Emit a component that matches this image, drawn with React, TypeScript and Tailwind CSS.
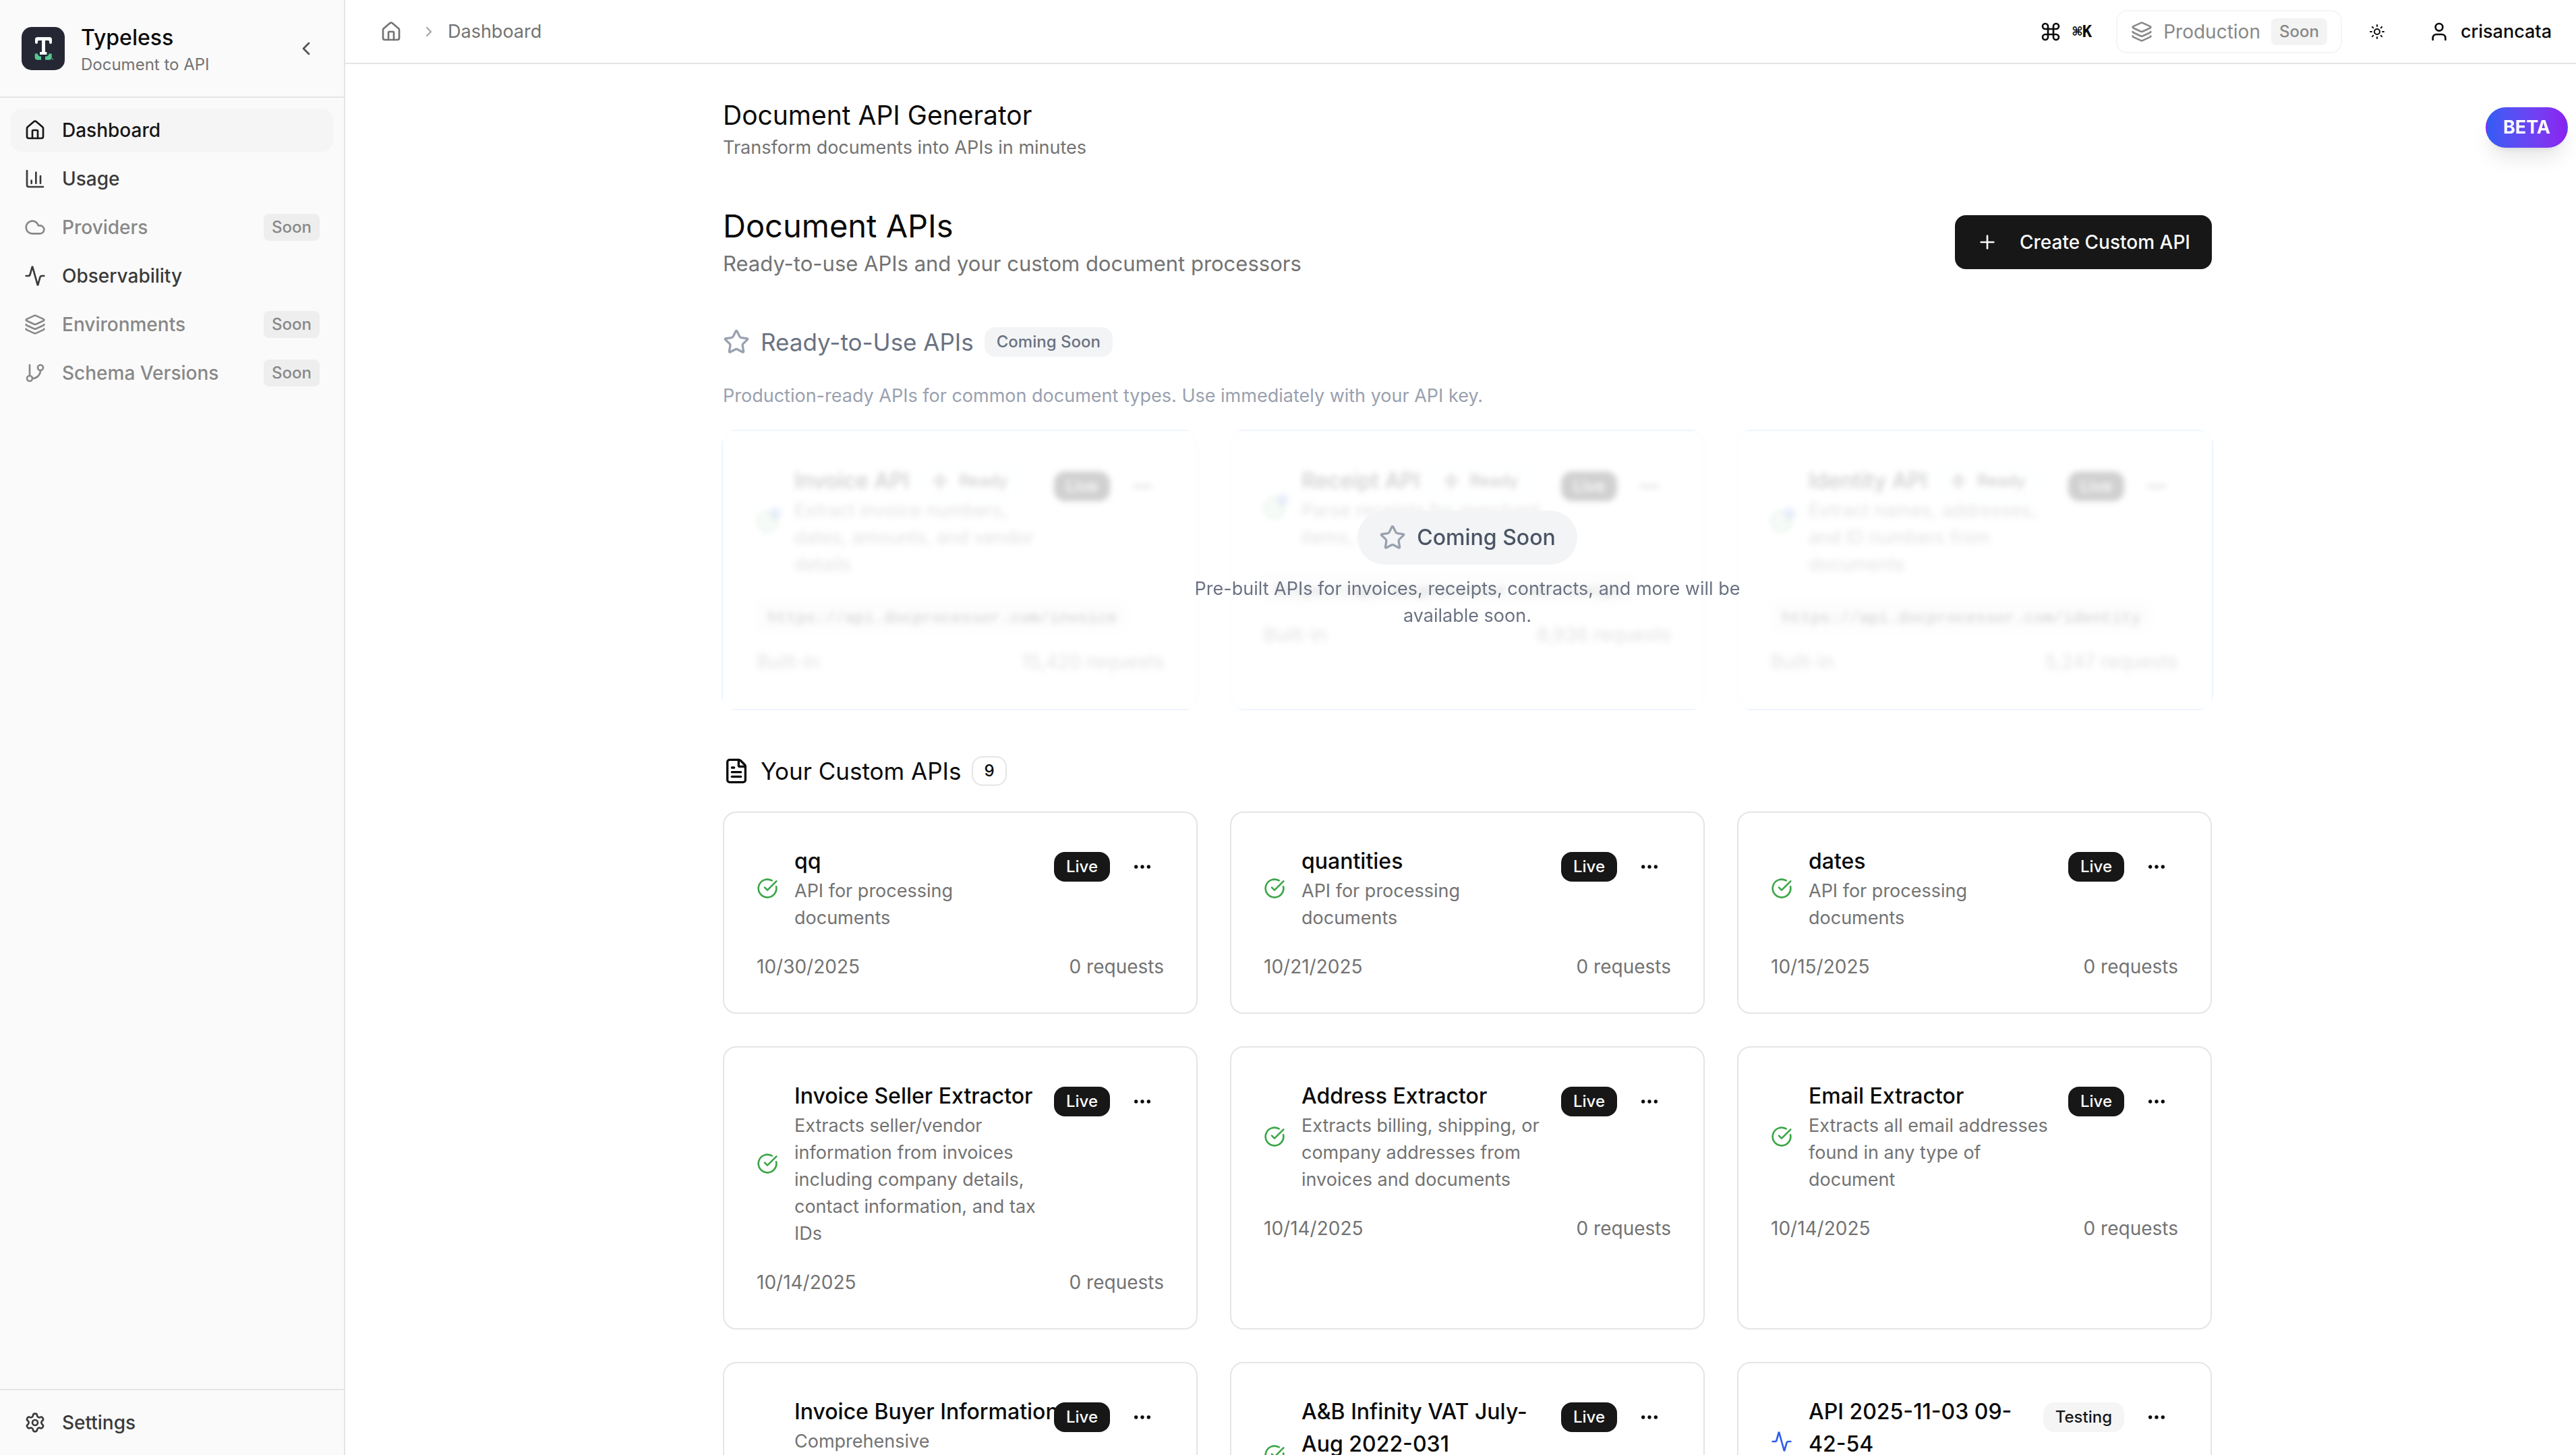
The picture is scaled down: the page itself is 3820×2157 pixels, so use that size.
import React from 'react';
import {
  Activity,
  ChevronLeft,
  ChevronRight,
  CircleCheckBig,
  Cloud,
  Command,
  Ellipsis,
  FileText,
  GitBranch,
  House,
  Layers,
  Plus,
  Settings,
  Star,
  Sun,
  User,
  Zap,
} from 'lucide-react';

interface NavItem {
  label: string;
  icon: React.ReactNode;
  active?: boolean;
  soon?: boolean;
}

interface ReadyApi {
  name: string;
  description: string;
  endpoint: string;
  requests: string;
}

interface CustomApi {
  name: string;
  description: string;
  date: string;
  status: 'Live' | 'Testing';
  singleLine?: boolean;
}

// Axis with three bars
const ChartIcon = () => (
  <svg className="size-8" viewBox="0 0 24 24" fill="none" stroke="currentColor" strokeWidth="2" strokeLinecap="round" strokeLinejoin="round">
    <path d="M3 3v16a2 2 0 0 0 2 2h16" />
    <path d="M18 17V9" />
    <path d="M13 17V5" />
    <path d="M8 17v-3" />
  </svg>
);

const navItems: NavItem[] = [
  { label: 'Dashboard', icon: <House className="size-8" />, active: true },
  { label: 'Usage', icon: <ChartIcon /> },
  { label: 'Providers', icon: <Cloud className="size-8" />, soon: true },
  { label: 'Observability', icon: <Activity className="size-8" /> },
  { label: 'Environments', icon: <Layers className="size-8" />, soon: true },
  { label: 'Schema Versions', icon: <GitBranch className="size-8" />, soon: true },
];

const readyApis: ReadyApi[] = [
  {
    name: 'Invoice API',
    description: 'Extract invoice numbers, dates, amounts, and vendor details',
    endpoint: 'https://api.docprocessor.com/invoice',
    requests: '15,420',
  },
  {
    name: 'Receipt API',
    description: 'Parse receipts for merchant, items, and totals',
    endpoint: 'https://api.docprocessor.com/receipt',
    requests: '8,936',
  },
  {
    name: 'Identity API',
    description: 'Extract names, addresses, and ID numbers from documents',
    endpoint: 'https://api.docprocessor.com/identity',
    requests: '5,247',
  },
];

const customApis: CustomApi[] = [
  { name: 'qq', description: 'API for processing documents', date: '10/30/2025', status: 'Live' },
  { name: 'quantities', description: 'API for processing documents', date: '10/21/2025', status: 'Live' },
  { name: 'dates', description: 'API for processing documents', date: '10/15/2025', status: 'Live' },
  {
    name: 'Invoice Seller Extractor',
    description: 'Extracts seller/vendor information from invoices including company details, contact information, and tax IDs',
    date: '10/14/2025',
    status: 'Live',
  },
  {
    name: 'Address Extractor',
    description: 'Extracts billing, shipping, or company addresses from invoices and documents',
    date: '10/14/2025',
    status: 'Live',
  },
  {
    name: 'Email Extractor',
    description: 'Extracts all email addresses found in any type of document',
    date: '10/14/2025',
    status: 'Live',
  },
  {
    name: 'Invoice Buyer Information',
    description: 'Comprehensive buyer/customer information extraction from invoices including company details, addresses, and tax IDs',
    date: '10/14/2025',
    status: 'Live',
    singleLine: true,
  },
  { name: 'A&B Infinity VAT July-Aug 2022-031', description: 'API for processing documents', date: '10/14/2025', status: 'Live' },
  { name: 'API 2025-11-03 09-42-54', description: 'Draft API', date: '11/3/2025', status: 'Testing' },
];

const Logo = () => (
  <svg className="size-16 shrink-0" viewBox="0 0 64 64" fill="none">
    <rect width="64" height="64" rx="15" fill="#252734" />
    <path
      d="M23 15h18.500a3.500 3.500 0 0 1 3.500 3.500V23a2 2 0 0 1-4 0v-1.500a1.500 1.500 0 0 0-1.500-1.500H35v17h1.300a1.200 1.200 0 0 1 1.200 1.200V41H27v-2.800a1.200 1.200 0 0 1 1.200-1.200H30V20h-4.500a1.500 1.500 0 0 0-1.500 1.500V23a2 2 0 0 1-4 0v-4.500A3.500 3.500 0 0 1 23 15Z"
      fill="#f6fffa"
    />
    <path d="M19.700 39.500h4.300v1.500l2.500 2.500H29v5.200h-5.500a3.800 3.800 0 0 1-3.800-3.800Z" fill="#56c890" />
    <path d="M44.700 39.500h-4.300v1.500l-2.500 2.500H35v5.200h5.900a3.800 3.800 0 0 0 3.800-3.800Z" fill="#56c890" />
    <circle cx="46" cy="47.500" r="1" fill="#8b9a98" />
  </svg>
);

const StatusBadge = ({ status }: { status: CustomApi['status'] }) => (
  <span
    className={`flex h-11 items-center rounded-2xl px-[18px] text-[24px] leading-8 font-medium ${
      status === 'Live' ? 'bg-[#171717] text-[#fafafa]' : 'bg-neutral-100 text-[#171717]'
    }`}
  >
    {status}
  </span>
);

const CardActions = ({ status, name }: { status: CustomApi['status']; name: string }) => (
  <div className="flex shrink-0 items-center gap-4">
    <StatusBadge status={status} />
    <button className="flex size-16 items-center justify-center rounded-2xl" aria-label={`Actions for ${name}`}>
      <Ellipsis className="size-8" />
    </button>
  </div>
);

const ReadyCard = ({ api }: { api: ReadyApi }) => (
  <div className="rounded-[20px] border-2 border-neutral-100 bg-blue-50/20 p-12 ring-2 ring-[#edf4ff]">
    <div className="flex items-start justify-between">
      <div className="flex items-center gap-6">
        <div className="relative shrink-0">
          <CircleCheckBig className="size-8 text-[#3da648]" />
          <Zap className="absolute -top-2 -right-2 size-6 fill-[#2f5fea] text-[#2f5fea] opacity-60" />
        </div>
        <div>
          <div className="flex h-12 items-center gap-4">
            <h3 className="text-[32px] leading-12 font-medium">{api.name}</h3>
            <span className="flex h-11 items-center gap-4 rounded-2xl border-2 border-neutral-100 px-4 text-[24px] leading-8 font-medium">
              <Zap className="size-6" />
              Ready
            </span>
          </div>
          <p className="text-[27px] leading-10 text-neutral-500">{api.description}</p>
        </div>
      </div>
      <CardActions status="Live" name={api.name} />
    </div>
    <div className="mt-8 flex">
      <code className="rounded-lg bg-neutral-100 px-4 pt-3 pb-1 font-['Liberation_Mono',monospace] text-[24px] leading-8">
        {api.endpoint}
      </code>
    </div>
    <div className="mt-6 flex items-center justify-between text-[28px] leading-10 text-neutral-500">
      <span>Built-in</span>
      <span>{api.requests} requests</span>
    </div>
  </div>
);

const CustomCard = ({ api }: { api: CustomApi }) => (
  <div className="rounded-[20px] border-2 border-neutral-200 bg-white p-12">
    <div className="flex items-start justify-between">
      <div className="flex min-w-0 items-center gap-6">
        {api.status === 'Live' ? (
          <CircleCheckBig className="size-8 shrink-0 text-[#3da648]" />
        ) : (
          <Activity className="size-8 shrink-0 text-[#2f5fea]" />
        )}
        <div className="min-w-0">
          <h3 className={`text-[32px] leading-12 font-medium ${api.singleLine ? 'whitespace-nowrap' : ''}`}>{api.name}</h3>
          <p className="pr-3 text-[27px] leading-10 text-neutral-500">{api.description}</p>
        </div>
      </div>
      <CardActions status={api.status} name={api.name} />
    </div>
    <div className="mt-8 flex items-center justify-between text-[28px] leading-10 text-neutral-500">
      <span>{api.date}</span>
      <span>0 requests</span>
    </div>
  </div>
);

const Sidebar = () => (
  <aside className="flex w-[512px] shrink-0 flex-col border-r-2 border-neutral-200 bg-neutral-50">
    <div className="flex h-[145px] items-center gap-6 border-b-2 border-neutral-200 px-8">
      <Logo />
      <div className="flex-1">
        <div className="text-[32px] leading-12 font-medium">Typeless</div>
        <div className="text-[24px] leading-8 text-neutral-500">Document to API</div>
      </div>
      <button className="flex size-12 items-center justify-center text-neutral-600" aria-label="Collapse sidebar">
        <ChevronLeft className="size-8" />
      </button>
    </div>

    <nav className="flex flex-1 flex-col gap-2 p-4">
      {navItems.map(item => (
        <a
          key={item.label}
          href="#"
          className={`flex h-16 items-center gap-6 rounded-2xl px-5 text-[28px] leading-10 font-medium ${
            item.active ? 'bg-neutral-100 text-[#171717]' : item.soon ? 'text-[#888888]' : 'text-[#3a3a3a]'
          }`}
        >
          {item.icon}
          <span className="flex-1">{item.label}</span>
          {item.soon && <span className="rounded-lg bg-[#eeeeee] px-3 py-1 text-[24px] leading-8">Soon</span>}
        </a>
      ))}
    </nav>

    <div className="border-t-2 border-neutral-200 p-4">
      <a href="#" className="flex h-16 items-center gap-6 rounded-2xl px-5 text-[28px] leading-10 font-medium text-[#3a3a3a]">
        <Settings className="size-8" />
        Settings
      </a>
    </div>
  </aside>
);

const TopBar = () => (
  <header className="flex h-[95px] shrink-0 items-center justify-between border-b-2 border-neutral-200 pr-4 pl-13 text-[27px] leading-10">
    <div className="flex items-center text-neutral-500">
      <a href="#" aria-label="Home">
        <House className="size-8" />
      </a>
      <ChevronRight className="mr-4 ml-7 size-6 text-neutral-400" />
      <span>Dashboard</span>
    </div>
    <div className="flex items-center gap-4">
      <button className="flex h-16 items-center gap-4 px-5 font-medium" aria-label="Open command menu">
        <Command className="size-8" />
        <kbd className="font-['DejaVu_Sans_Mono',monospace] text-[24px] leading-8 font-bold">⌘K</kbd>
      </button>
      <button className="flex h-16 items-center gap-4 rounded-2xl border-2 border-neutral-100 px-5 text-[28px] text-[#888888]">
        <Layers className="size-8" />
        Production
        <span className="rounded-lg bg-[#f3f3f3] px-3 py-1 text-[24px] leading-8 font-medium">Soon</span>
      </button>
      <button className="flex h-16 w-18 items-center justify-center" aria-label="Toggle theme">
        <Sun className="size-6" />
      </button>
      <button className="flex h-16 items-center gap-4 pr-5 pl-6 font-medium">
        <User className="size-8" />
        crisancata
      </button>
    </div>
  </header>
);

const App: React.FC = () => {
  return (
    <div className="flex h-screen overflow-hidden bg-white font-['Inter',sans-serif] text-neutral-950">
      <Sidebar />
      <div className="flex min-w-0 flex-1 flex-col">
        <TopBar />
        <main className="flex-1 overflow-hidden pl-5">
          <div className="mx-auto max-w-[2208px] pt-12">
            <h1 className="text-[39px] leading-14">Document API Generator</h1>
            <p className="text-[27px] leading-10 text-neutral-500">Transform documents into APIs in minutes</p>

            <div className="mt-16 flex items-center justify-between">
              <div>
                <h2 className="text-[47px] leading-16">Document APIs</h2>
                <p className="text-[31px] leading-12 text-neutral-500">Ready-to-use APIs and your custom document processors</p>
              </div>
              <button className="flex h-20 items-center gap-8 rounded-2xl bg-[#171717] px-8 text-[28px] leading-10 font-medium text-[#fafafa]">
                <Plus className="size-8" />
                Create Custom API
              </button>
            </div>

            <section className="mt-16">
              <div className="flex items-center gap-4">
                <Star className="size-10 text-gray-400" />
                <h2 className="text-[35px] leading-14 text-gray-500">Ready-to-Use APIs</h2>
                <span className="flex h-11 items-center rounded-2xl bg-gray-100 px-[18px] text-[24px] leading-8 font-medium text-gray-500">
                  Coming Soon
                </span>
              </div>
              <p className="mt-8 text-[27px] leading-10 text-gray-400">
                Production-ready APIs for common document types. Use immediately with your API key.
              </p>
              <div className="relative mt-8">
                <div className="grid grid-cols-3 gap-12">
                  {readyApis.map(api => (
                    <ReadyCard key={api.name} api={api} />
                  ))}
                </div>
                {/* Frosted overlay until the pre-built APIs ship */}
                <div className="absolute inset-0 flex flex-col items-center justify-center gap-4 bg-white/80 backdrop-blur-[4px]">
                  <div className="flex h-20 items-center gap-4 rounded-full bg-gray-100 px-8 text-[32px] leading-12 font-medium text-gray-600">
                    <Star className="size-10 text-gray-400" />
                    Coming Soon
                  </div>
                  <p className="max-w-[896px] text-center text-[27px] leading-10 text-gray-500">
                    Pre-built APIs for invoices, receipts, contracts, and more will be available soon.
                  </p>
                </div>
              </div>
            </section>

            <section className="mt-16">
              <div className="flex items-center gap-4">
                <FileText className="size-10" />
                <h2 className="text-[35px] leading-14">Your Custom APIs</h2>
                <span className="flex h-11 items-center rounded-2xl border-2 border-neutral-200 px-4 text-[24px] leading-8 font-medium">9</span>
              </div>
              <div className="mt-8 grid grid-cols-3 gap-12">
                {customApis.map(api => (
                  <CustomCard key={api.name} api={api} />
                ))}
              </div>
            </section>
          </div>
        </main>
      </div>

      <div className="fixed top-[159px] right-3 flex h-[60px] items-center rounded-full border-2 border-transparent bg-linear-to-r from-[#2f5cf5] to-[#8a20f0] px-6 text-[27px] leading-10 font-bold text-white shadow-[0_20px_30px_-6px_rgba(0,0,0,0.1),0_8px_12px_-8px_rgba(0,0,0,0.1)]">
        BETA
      </div>
    </div>
  );
};

export default App;
